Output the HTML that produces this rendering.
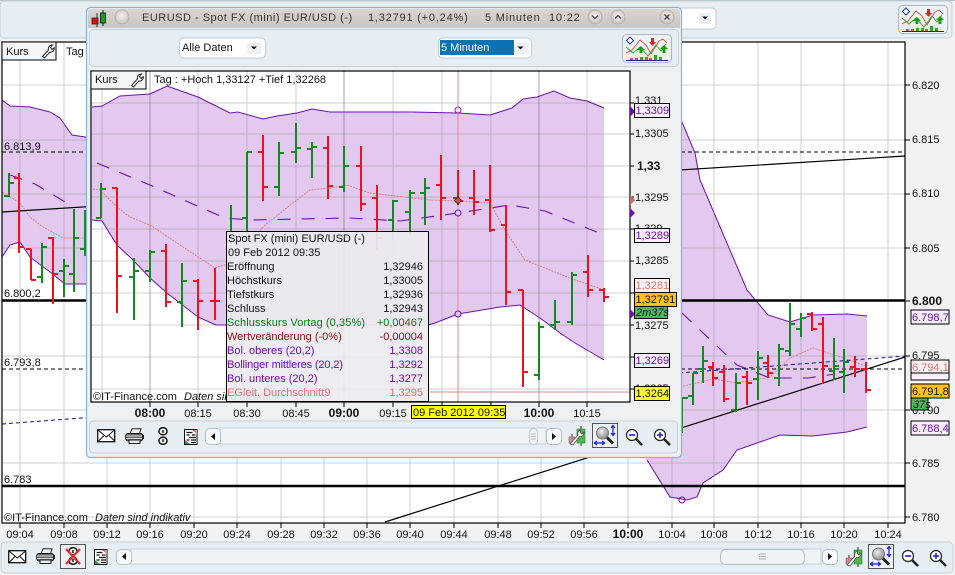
<!DOCTYPE html>
<html><head><meta charset="utf-8"><style>
html,body{margin:0;padding:0;background:#f2f2f2;width:955px;height:575px;overflow:hidden}
svg{display:block}
text{font-family:"Liberation Sans",sans-serif;font-size:11px;fill:#111}
.b{font-weight:bold;font-size:12px}
.i{font-style:italic}
.p{fill:#6a12a8}
.s{fill:#d97878}
</style></head><body>
<svg xmlns="http://www.w3.org/2000/svg" width="955" height="575" viewBox="0 0 955 575">
<defs>
<linearGradient id="tb" x1="0" y1="0" x2="0" y2="1"><stop offset="0" stop-color="#d9d6d2"/><stop offset="1" stop-color="#c9c6c2"/></linearGradient>
<radialGradient id="btn" cx=".5" cy=".4" r=".6"><stop offset="0" stop-color="#f4f3f2"/><stop offset="1" stop-color="#c4c1bd"/></radialGradient>
<radialGradient id="lens" cx=".4" cy=".35" r=".7"><stop offset="0" stop-color="#eee"/><stop offset="1" stop-color="#888"/></radialGradient>
<symbol id="mail" width="19" height="14" viewBox="0 0 19 14"><rect x=".7" y=".7" width="17" height="12" fill="#fff" stroke="#111" stroke-width="1.300"/><path d="M1 1l8.300 7 8.300-7M1 12.500l6-6M18 12.500l-6-6" fill="none" stroke="#111"/></symbol>
<symbol id="print" width="20" height="17" viewBox="0 0 20 17"><path d="M5 6L7 .8h9L14.500 6z" fill="#eee" stroke="#222"/><rect x=".7" y="5.500" width="17" height="7.500" rx="2.500" fill="#666" stroke="#111"/><path d="M1 8h16M1 10.500h16" stroke="#ddd"/><rect x="4" y="12" width="11" height="3.500" fill="#eee" stroke="#222"/><rect x="17" y="7" width="2" height="4" fill="#222"/></symbol>
<symbol id="link" width="10" height="18" viewBox="0 0 10 18"><rect x="1" y=".8" width="8" height="7" rx="3.500" fill="#fff" stroke="#111" stroke-width="1.500"/><rect x="1" y="10.200" width="8" height="7" rx="3.500" fill="#fff" stroke="#111" stroke-width="1.500"/><path d="M5 3v3M5 12v3" stroke="#111" stroke-width="1.500"/></symbol>
<symbol id="list" width="14" height="16" viewBox="0 0 14 16"><rect x=".5" y=".5" width="12.500" height="15" fill="#fff" stroke="#111"/><path d="M8 1h5v4z" fill="#d98080"/><path d="M1 15v-4l5 4z" fill="#3a9a50"/><path d="M2.500 3.500h6M2.500 6h3M8 6h3.500M5 8.500h7M2.500 11h3M7 11h5M7 13.500h5" stroke="#111" stroke-width="1.200"/></symbol>
<symbol id="wr" width="18" height="20" viewBox="0 0 18 20"><path d="M13 0v20" stroke="#333"/><rect x="9" y="3" width="8" height="14" fill="#4fb84f" stroke="#2d7a2d" stroke-width=".6"/><path d="M4 8v11" stroke="#333"/><rect x="1" y="11" width="6" height="6" fill="#c98a96" stroke="#8a5a66" stroke-width=".6"/><path d="M2 18l8-9c-1-3 1-5 3-5l-1 2.500 2 1.500 2-2c.5 2.500-2 5-4.500 4.500L5 19z" fill="#fff" stroke="#444" stroke-width=".7"/></symbol>
<symbol id="zfit" width="26" height="25" viewBox="0 0 26 25"><rect x=".5" y=".5" width="25" height="24" fill="#eef2f5" stroke="#555"/><circle cx="10.500" cy="10" r="6" fill="url(#lens)" stroke="#777"/><path d="M15 14.500l6 6" stroke="#222" stroke-width="3"/><path d="M21 3v9M19 5l2-2.500L23 5M19 10l2 2.500 2-2.500M3 20h9M5 18l-2.500 2L5 22M10 18l2.500 2-2.500 2" fill="none" stroke="#1a1ad0" stroke-width="1.200"/></symbol>
<symbol id="zm" width="18" height="18" viewBox="0 0 18 18"><circle cx="7" cy="7" r="5.500" fill="#fff" stroke="#222" stroke-width="1.200"/><path d="M4 7h6" stroke="#1a1ad0" stroke-width="1.600"/><path d="M11 11l6 6" stroke="#222" stroke-width="2.600"/></symbol>
<symbol id="zp" width="18" height="18" viewBox="0 0 18 18"><circle cx="7" cy="7" r="5.500" fill="#fff" stroke="#222" stroke-width="1.200"/><path d="M4 7h6M7 4v6" stroke="#1a1ad0" stroke-width="1.500"/><path d="M11 11l6 6" stroke="#222" stroke-width="2.600"/></symbol>
<symbol id="wrench" width="14" height="15" viewBox="0 0 14 15"><path d="M1.500 12.500L7.500 6C6.800 3.500 8.500 1 11.500 1L9.500 3.500l1.500 2 2.300-1.800C13.500 6.500 11 8.500 8.800 8L3.500 14z" fill="#fff" stroke="#222"/></symbol>
<symbol id="chic" width="50" height="29" viewBox="0 0 50 29"><rect x=".5" y=".5" width="49" height="28" rx="4" fill="#f0f2f3" stroke="#aeb8bf"/><path d="M4 20l9-8 7 9 9-10 6 9 9-12v16H4z" fill="#e4f3e2"/><path d="M4 19l6-3 8-10 6 5 5 9 8-13 4-2 4 4" fill="none" stroke="#c85050" stroke-width=".9"/><path d="M4 13l7 6 7-6 8 9 8-11 5 6 5-7" fill="none" stroke="#3a9a3a" stroke-width=".9"/><path d="M8 3l3.500 3.500L8 10 4.500 6.500z" fill="#fff" stroke="#1a3f9a"/><path d="M29 4h3v4h2l-3.500 4L27 8h2z" fill="#e02020"/><path d="M17.500 19h3v-3h2.500L19 12 15 16h2.500z" fill="#10a010"/><path d="M40.500 19h3v-4H46L42 11l-4 4h2.500z" fill="#10a010"/><path d="M8 24h3v2H8zM13 24h3v2h-3z" fill="#c84a90"/><path d="M18 23h3v3h-3zM23 23h3v3h-3zM32 21h3v5h-3zM37 23h3v3h-3z" fill="#20b020"/><path d="M27 24h3v2h-3z" fill="#c84a90"/><path d="M4 26.500h42" stroke="#2a1a8a"/></symbol>
</defs>

<!-- background window -->
<rect width="955" height="575" fill="#f2f2f2"/>
<rect x="0" y="0" width="955" height="1" fill="#b5bec5"/>
<rect x="0" y="1" width="952" height="37" rx="4" fill="#e6eef4" stroke="#c5d0d8"/>
<rect x="660" y="8" width="56" height="21" rx="4" fill="#fff" stroke="#c2ccd3"/>
<rect x="699" y="13" width="12" height="11" fill="#eef1f3"/>
<path d="M702 16.500h6l-3 3z" fill="#111"/>
<use href="#chic" x="898" y="5"/>
<rect x="2" y="42" width="903" height="481" fill="#fff"/>
<!-- bands -->
<path d="M2 100L10 106 30 107 50 112 60 118 72 135 92 138V284H65L50 272 30 257 20 242 10 245 2 257Z" fill="#e3c9f0"/>
<path d="M640 100L682 122 695 153 700 180 747 290 768 315 790 322 813 315 847 314 867 316V427L847 432 813 436 780 435 757 443 737 450 723 470 703 483 697 497 687 500 670 497 647 460 630 440Z" fill="#e3c9f0"/>
<path d="M2 100L10 106 30 107 50 112 60 118 72 135 92 138M2 257L10 245 20 242 30 257 50 272 65 284H92M640 100L682 122 695 153 700 180 747 290 768 315 790 322 813 315 847 314 867 316M867 427L847 432 813 436 780 435 757 443 737 450 723 470 703 483 697 497 687 500 670 497 647 460" fill="none" stroke="#6a12a8"/>
<!-- grid -->
<path d="M20 42V523M64 42V523M107 42V523M150 42V523M194 42V523M237 42V523M281 42V523M324 42V523M367 42V523M410 42V523M454 42V523M498 42V523M541 42V523M584 42V523M628 42V523M672 42V523M714 42V523M758 42V523M801 42V523M844 42V523M888 42V523M2 85H905M2 140H905M2 194H905M2 248H905M2 356H905M2 410H905M2 463H905M2 517H905" fill="none" stroke="#8c8c8c" stroke-opacity=".42"/>
<!-- mid dashed -->
<path d="M10 175L35 184 72 206M682 313L737 365 770 378H808L835 374" fill="none" stroke="#6a12a8" stroke-width="1.100" stroke-dasharray="13 11"/>
<path d="M2 192L20 203 30 217 43 227 63 238H92M680 387L713 379 737 383 770 377 790 358 813 348 843 358 866 366" fill="none" stroke="#dd8a8a" stroke-dasharray="2 1"/>
<!-- trend and levels -->
<path d="M2 212L905 156M385 522L905 357" stroke="#000" stroke-width="1.200" fill="none"/>
<path d="M2 152H905M2 369H905" stroke="#000" stroke-dasharray="4 3" fill="none"/>
<path d="M2 424L906 356" stroke="#15157a" stroke-dasharray="4 3" fill="none"/>
<path d="M2 300.500H905M2 486H905" stroke="#000" stroke-width="2.500"/>
<!-- candles back -->
<path d="M9 173V197M9 183h5M9 196h-5M42 243V283M42 247h5M42 277h-5M64 259V297M64 266h5M64 271h-5M74 209V292M74 238h5M74 274h-5M85 210V256M85 249h-5M682 398V433M682 398h6M693 373V405M693 373h5M693 396h-5M703 346V383M703 361h5M703 369h-5M736 373V412M736 383h5M736 410h-5M758 351V400M758 358h5M758 379h-5M779 344V386M779 349h5M779 378h-5M790 303V356M790 324h5M790 351h-5M801 313V337M801 318h5M801 329h-5M834 338V380M834 366h5M834 371h-5M844 349V393M844 362h5M844 372h-5" fill="none" stroke="#138a20" stroke-width="2"/>
<path d="M19 173V253M19 178h-5M19 247h5M31 249V280M31 249h-5M31 280h5M53 237V304M53 238h-5M53 274h5M713 362V386M713 367h-5M713 378h5M724 365V402M724 372h-5M724 399h5M747 371V405M747 377h-5M747 383h5M768 355V378M768 363h-5M768 373h5M812 312V331M812 314h-5M812 329h5M823 317V384M823 324h-5M823 366h5M855 356V377M855 367h-5M855 369h5M866 362V393M866 369h-5M866 390h5" fill="none" stroke="#ee1122" stroke-width="2"/>
<circle cx="682" cy="500" r="3" fill="none" stroke="#6a12a8"/>
<!-- back labels -->
<text x="4" y="150">6.813,9</text><text x="4" y="297">6.800,2</text><text x="4" y="366">6.793,8</text><text x="4" y="483">6.783</text>
<text x="4" y="521">©IT-Finance.com</text><text x="95" y="521" class="i">Daten sind indikativ</text>
<!-- back frame -->
<rect x="2" y="42" width="903" height="481" fill="none" stroke="#000" stroke-width="1.200"/>
<rect x="2" y="42" width="54" height="18" fill="#f4f6f8" stroke="#000"/>
<text x="6" y="55">Kurs</text><use href="#wrench" x="41" y="44"/>
<text x="66" y="55">Tag</text>
<!-- right axis back -->
<path d="M905 85h5M905 140h5M905 194h5M905 248h5M905 301h5M905 356h5M905 410h5M905 463h5M905 517h5" stroke="#000"/>
<g>
<text x="912" y="89">6.820</text><text x="912" y="143">6.815</text><text x="912" y="197">6.810</text><text x="912" y="252">6.805</text>
<text x="912" y="305" class="b">6.800</text><text x="912" y="359">6.795</text><text x="912" y="414">6.790</text><text x="912" y="467">6.785</text><text x="912" y="521">6.780</text>
</g>
<rect x="911" y="310" width="38" height="14" fill="#f7f0fb" stroke="#000"/><text x="912" y="321" class="p">6.798,7</text>
<rect x="911" y="373" width="38" height="7" fill="#f7f0fb" stroke="#000"/>
<rect x="911" y="360" width="38" height="13" fill="#fbf1f1" stroke="#000"/><text x="912" y="371" class="s">6.794,1</text>
<rect x="911" y="384" width="38" height="14" fill="#ffc21a" stroke="#000"/><text x="912" y="395">6.791,8</text>
<rect x="911" y="398" width="17" height="12" fill="#4fb85a" stroke="#000"/><text x="913" y="408" class="i">37s</text>
<rect x="911" y="421" width="38" height="14" fill="#f7f0fb" stroke="#000"/><text x="912" y="432" class="p">6.788,4</text>
<!-- time axis back -->
<path d="M20 523v5M64 523v5M107 523v5M150 523v5M194 523v5M237 523v5M281 523v5M324 523v5M367 523v5M410 523v5M454 523v5M498 523v5M541 523v5M584 523v5M628 523v5M672 523v5M714 523v5M758 523v5M801 523v5M844 523v5M888 523v5" stroke="#000"/>
<g text-anchor="middle">
<text x="20" y="538">09:04</text><text x="64" y="538">09:08</text><text x="107" y="538">09:12</text><text x="150" y="538">09:16</text><text x="194" y="538">09:20</text><text x="237" y="538">09:24</text><text x="281" y="538">09:28</text><text x="324" y="538">09:32</text><text x="367" y="538">09:36</text><text x="410" y="538">09:40</text><text x="454" y="538">09:44</text><text x="498" y="538">09:48</text><text x="541" y="538">09:52</text><text x="584" y="538">09:56</text><text x="628" y="538" class="b">10:00</text><text x="672" y="538">10:04</text><text x="714" y="538">10:08</text><text x="758" y="538">10:12</text><text x="801" y="538">10:16</text><text x="844" y="538">10:20</text><text x="888" y="538">10:24</text>
</g>
<!-- bottom toolbar back -->
<rect x="1" y="542" width="952" height="31" rx="4" fill="#e6eef4" stroke="#c5d0d8"/>
<use href="#mail" x="8" y="550"/><use href="#print" x="36" y="548"/>
<rect x="60.500" y="544.500" width="25" height="24" fill="#eef2f5" stroke="#555"/><use href="#link" x="68" y="547"/>
<path d="M66 549l14 15M80 549l-14 15" stroke="#e03030" stroke-width="2.200"/>
<use href="#list" x="94" y="549"/>
<rect x="131" y="549" width="690" height="15" fill="#eef3f6" stroke="#c5d0d8"/>
<rect x="116.500" y="549.500" width="15" height="15" rx="4" fill="#f5f7f8" stroke="#b5c0c8"/><path d="M126 553v7l-4-3.500z" fill="#111"/>
<rect x="720.500" y="549.500" width="84" height="15" rx="5" fill="#eef3f6" stroke="#b5c0c8"/><path d="M759 554h7M759 556.500h7M759 559h7" stroke="#aab3ba"/>
<rect x="822.500" y="549.500" width="15" height="15" rx="4" fill="#f5f7f8" stroke="#b5c0c8"/><path d="M828 553v7l4-3.500z" fill="#111"/>
<use href="#wr" x="845" y="547"/><use href="#zfit" x="868" y="544"/><use href="#zm" x="901" y="549"/><use href="#zp" x="929" y="549"/>

<!-- FRONT WINDOW -->
<rect x="86.500" y="7.500" width="595" height="450" rx="4" fill="#eff0f1" stroke="#85b4d6" stroke-width="1.200"/>
<path d="M88 28V12a3 3 0 0 1 3-3H677a3 3 0 0 1 3 3V28z" fill="url(#tb)"/>
<path d="M97 13v14" stroke="#333"/>
<rect x="92" y="18" width="6" height="6" fill="#e01010" stroke="#222" stroke-width=".8"/>
<path d="M103 10v16" stroke="#111"/><rect x="100.500" y="13" width="5" height="10" fill="#10a020" stroke="#111" stroke-width=".8"/>
<circle cx="122" cy="17" r="7" fill="url(#btn)" stroke="#b5b2ae"/>
<text x="142" y="21" style="letter-spacing:.5px;fill:#333">EURUSD - Spot FX (mini) EUR/USD (-)</text>
<text x="368" y="21" style="letter-spacing:.8px;fill:#333">1,32791 (+0,24%)</text>
<text x="485" y="21" style="letter-spacing:.8px;fill:#333">5 Minuten</text>
<text x="549" y="21" style="letter-spacing:.8px;fill:#333">10:22</text>
<circle cx="595" cy="17" r="7" fill="url(#btn)" stroke="#b5b2ae"/><path d="M592 15.500l3 3 3-3" fill="none" stroke="#444" stroke-width="1.300"/>
<circle cx="618" cy="17" r="7" fill="url(#btn)" stroke="#b5b2ae"/><path d="M615 18.500l3-3 3 3" fill="none" stroke="#444" stroke-width="1.300"/>
<circle cx="667" cy="17" r="7" fill="url(#btn)" stroke="#b5b2ae"/><path d="M664.500 14.500l5 5M669.500 14.500l-5 5" stroke="#444" stroke-width="1.400"/>
<!-- top panel -->
<rect x="89.500" y="29.500" width="589" height="37" rx="4" fill="#e6eef4" stroke="#c5d0d8"/>
<rect x="179.500" y="38" width="86" height="20" rx="4" fill="#fff" stroke="#c2ccd3"/>
<text x="182" y="51">Alle Daten</text>
<rect x="247" y="43" width="14" height="11" fill="#eef1f3"/><path d="M251 46.500h6l-3 3z" fill="#111"/>
<rect x="438.500" y="38" width="93" height="20" rx="4" fill="#fff" stroke="#c2ccd3"/>
<rect x="440" y="40" width="74" height="15" fill="#0a73b5"/>
<text x="441" y="51" style="fill:#fff">5 Minuten</text>
<rect x="515" y="43" width="14" height="11" fill="#eef1f3"/><path d="M517.500 46.500h6l-3 3z" fill="#111"/>
<use href="#chic" x="622" y="34"/>
<!-- front chart -->
<rect x="91" y="71" width="539" height="331" fill="#fff"/>
<path d="M92 107L102 106 120 96 150 94 167 86 198 97 230 113 238 112 263 119 277 116 297 113 312 109 330 112H412L458 113 490 115 512 108 523 99 537 97 554 91 570 98 587 101 604 108V360L575 343 560 333 540 318 520 305 500 307 458 314 435 323 428 325H227L216 325 198 317 167 293 150 278 133 260 117 245 102 221 92 220Z" fill="#e3c9f0"/>
<path d="M102 71V402M198 71V402M247 71V402M296 71V402M393 71V402M442 71V402M491 71V402M587 71V402M91 103H630M91 134H630M91 166H630M91 197H630M91 229H630M91 261H630M91 293H630M91 325H630M91 357H630M91 389H630" stroke="#8c8c8c" stroke-opacity=".42"/>
<path d="M150 71V402M344 71V402M539 71V402" stroke="#777" stroke-opacity=".65"/>
<path d="M92 107L102 106 120 96 150 94 167 86 198 97 230 113 238 112 263 119 277 116 297 113 312 109 330 112H412L458 113 490 115 512 108 523 99 537 97 554 91 570 98 587 101 604 108M604 360L575 343 560 333 540 318 520 305 500 307 458 314 435 323 428 325H216L198 317 167 293 150 278 133 260 117 245 102 221 92 220" fill="none" stroke="#6a12a8"/>
<path d="M97 163L150 185 195 205 225 218 250 220 300 219 350 218 400 221 458 213 510 205 545 211 604 235" fill="none" stroke="#6a12a8" stroke-width="1.100" stroke-dasharray="13 11"/>
<path d="M93 189L100 190 117 207 130 217 150 225 183 247 215 268 230 263 265 225 293 203 310 190 330 188 347 185 370 193 430 200 458 201 490 203 505 230 525 260 570 278 604 290" fill="none" stroke="#dd8080" stroke-dasharray="2 1"/>
<path d="M458 71V402M430 392H630" stroke="#e88a8a"/>
<!-- candles front -->
<path d="M101 183V218M101 189h5M101 218h-5M134 258V320M134 271h5M134 277h-5M150 250V282M150 252h5M150 271h-5M182 263V327M182 281h5M182 302h-5M231 205V260M247 152V235M247 152h5M247 218h-5M279 142V196M279 153h5M279 187h-5M296 123V163M296 148h5M296 152h-5M312 142V178M312 147h5M312 149h-5M344 146V192M344 166h5M344 187h-5M393 200V240M393 201h5M393 220h-5M410 190V235M410 193h5M410 212h-5M425 178V225M425 188h5M425 193h-5M539 322V380M539 327h5M539 375h-5M555 300V330M555 322h5M555 325h-5M572 272V325M572 275h5M572 322h-5" fill="none" stroke="#138a20" stroke-width="2"/>
<path d="M117 188V313M117 188h-5M117 276h5M166 244V307M166 251h-5M166 302h5M198 279V330M198 281h-5M198 301h5M215 268V320M215 301h-5M215 301h5M263 135V201M263 152h-5M263 187h5M328 136V199M328 148h-5M328 186h5M361 146V211M361 166h-5M361 204h5M377 185V250M377 198h-5M377 238h5M441 155V220M441 185h-5M441 198h5M458 170V205M458 198h-5M458 201h5M474 170V215M474 198h-5M474 202h5M490 165V232M490 200h-5M490 230h5M506 205V305M506 225h-5M506 292h5M523 290V387M523 290h-5M523 372h5M588 255V297M588 272h-5M588 290h5M604 288V302M604 290h-5M604 297h5" fill="none" stroke="#ee1122" stroke-width="2"/>
<circle cx="458" cy="110" r="3" fill="#f5e6fb" stroke="#8a2ab0"/><circle cx="458" cy="213" r="3" fill="#e3c9f0" stroke="#6a12a8"/><circle cx="458" cy="314" r="3" fill="#e3c9f0" stroke="#6a12a8"/>
<path d="M458 197l3.500 3.500-3.500 3.500-3.500-3.500z" fill="#c55" stroke="#522"/>
<text x="93" y="400">©IT-Finance.com</text><text x="184" y="400" class="i">Daten sind indikativ</text>
<rect x="91" y="71" width="539" height="331" fill="none" stroke="#000" stroke-width="1.200"/>
<rect x="91" y="71" width="55" height="18" fill="#f4f6f8" stroke="#000"/>
<text x="95" y="83">Kurs</text><use href="#wrench" x="130" y="73"/>
<text x="154" y="83">Tag : +Hoch 1,33127 +Tief 1,32268</text>
<!-- tooltip -->
<rect x="226.500" y="231.500" width="202" height="170" fill="#ecebf0" fill-opacity=".93" stroke="#000"/>
<text x="228" y="242">Spot FX (mini) EUR/USD (-)</text>
<text x="228" y="256">09 Feb 2012 09:35</text>
<text x="227" y="270">Eröffnung</text><text x="423" y="270" text-anchor="end">1,32946</text>
<text x="227" y="284">Höchstkurs</text><text x="423" y="284" text-anchor="end">1,33005</text>
<text x="227" y="298">Tiefstkurs</text><text x="423" y="298" text-anchor="end">1,32936</text>
<text x="227" y="312">Schluss</text><text x="423" y="312" text-anchor="end">1,32943</text>
<text x="227" y="326" style="fill:#0a7a1a" textLength="138">Schlusskurs Vortag (0,35%)</text><text x="423" y="326" text-anchor="end" style="fill:#0a7a1a">+0,00467</text>
<text x="227" y="340" style="fill:#8b0f0f">Wertveränderung (-0%)</text><text x="423" y="340" text-anchor="end" style="fill:#8b0f0f">-0,00004</text>
<text x="227" y="354" class="p">Bol. oberes (20,2)</text><text x="423" y="354" text-anchor="end" class="p">1,3308</text>
<text x="227" y="368" class="p" textLength="116">Bollinger mittleres (20,2)</text><text x="423" y="368" text-anchor="end" class="p">1,3292</text>
<text x="227" y="382" class="p">Bol. unteres (20,2)</text><text x="423" y="382" text-anchor="end" class="p">1,3277</text>
<text x="227" y="396" class="s">EGleit. Durchschnitt9</text><text x="423" y="396" text-anchor="end" class="s">1,3295</text>
<!-- right axis front -->
<path d="M630 103h4M630 134h4M630 166h4M630 197h4M630 229h4M630 261h4M630 293h4M630 325h4M630 357h4M630 389h4" stroke="#000"/>
<text x="635" y="104">1,331</text><text x="635" y="137">1,3305</text><text x="637" y="170" class="b">1,33</text><text x="635" y="201">1,3295</text><text x="635" y="232">1,329</text><text x="635" y="264">1,3285</text><text x="635" y="329">1,3275</text><text x="635" y="361">1,327</text><text x="635" y="392">1,3265</text>
<path d="M630 106l5 5.500-5 5.500zM630 208l5 5-5 5zM630 309l5 5-5 5z" fill="#6a12a8"/><path d="M630 195l5 5-5 5z" fill="#c56a6a"/>
<rect x="634.500" y="103.500" width="35" height="14" fill="#f7f0fb" stroke="#000"/><text x="635.500" y="114" class="p">1,3309</text>
<rect x="634.500" y="228.500" width="35" height="14" fill="#f7f0fb" stroke="#000"/><text x="635.500" y="239" class="p">1,3289</text>
<rect x="634.500" y="278.500" width="35" height="14" fill="#fbf1f1" stroke="#000"/><text x="635.500" y="289" class="s">1,3281</text>
<rect x="634.500" y="292.500" width="42" height="14" fill="#ffc21a" stroke="#000"/><text x="635.500" y="303">1,32791</text>
<rect x="634.500" y="306.500" width="33" height="12" fill="#4fb85a" stroke="#000"/><text x="636" y="316" class="i">2m37s</text>
<rect x="634.500" y="353.500" width="35" height="14" fill="#f7f0fb" stroke="#000"/><text x="635.500" y="364" class="p">1,3269</text>
<rect x="634.500" y="386.500" width="35" height="14" fill="#ffff20" stroke="#000"/><text x="635.500" y="397">1,3264</text>
<!-- time axis front -->
<path d="M150 402v5M198 402v5M247 402v5M296 402v5M344 402v5M393 402v5M442 402v5M491 402v5M539 402v5M587 402v5" stroke="#000"/>
<g text-anchor="middle">
<text x="150" y="417" class="b">08:00</text><text x="198" y="417">08:15</text><text x="247" y="417">08:30</text><text x="296" y="417">08:45</text><text x="344" y="417" class="b">09:00</text><text x="393" y="417">09:15</text><text x="539" y="417" class="b">10:00</text><text x="587" y="417">10:15</text>
</g>
<rect x="411.500" y="405.500" width="94" height="13" fill="#ffff00" stroke="#000"/><text x="413" y="416">09 Feb 2012 09:35</text>
<!-- bottom toolbar front -->
<rect x="89.500" y="421" width="588" height="32" rx="4" fill="#e6eef4" stroke="#c5d0d8"/>
<use href="#mail" x="97" y="429"/><use href="#print" x="125" y="428"/><use href="#link" x="158" y="427"/><use href="#list" x="184" y="429"/>
<rect x="220" y="428" width="326" height="16" fill="#eef3f6" stroke="#c5d0d8"/>
<rect x="205.500" y="428.500" width="15" height="16" rx="4" fill="#f5f7f8" stroke="#b5c0c8"/><path d="M215 433v7l-4-3.500z" fill="#111"/>
<rect x="529.500" y="428.500" width="8" height="16" rx="4" fill="#eef3f6" stroke="#c0cad1"/><path d="M531 434h5M531 436.500h5M531 439h5" stroke="#b5bec5"/>
<rect x="546.500" y="428.500" width="15" height="16" rx="4" fill="#f5f7f8" stroke="#b5c0c8"/><path d="M552 433v7l4-3.500z" fill="#111"/>
<use href="#wr" x="568" y="426"/><use href="#zfit" x="592" y="423"/><use href="#zm" x="625" y="428"/><use href="#zp" x="653" y="428"/>
</svg>
</body></html>
